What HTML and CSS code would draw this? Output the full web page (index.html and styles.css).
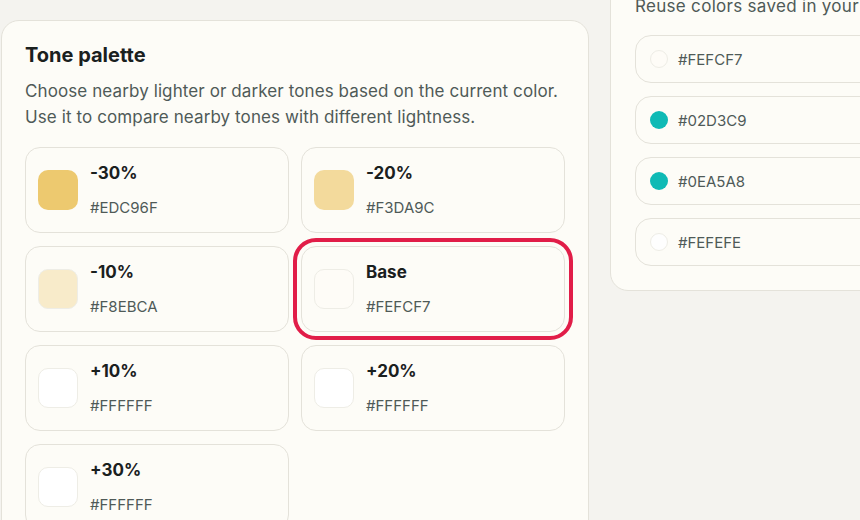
FILE: index.html
```html
<!DOCTYPE html>
<html lang="en">
<head>
<meta charset="utf-8">
<title>Tone palette</title>
<link rel="stylesheet" href="styles.css">
</head>
<body>
<div class="layout">
  <section class="panel tone-panel">
    <h2 class="panel-title">Tone palette</h2>
    <p class="panel-desc">Choose nearby lighter or darker tones based on the current color. Use it to compare nearby tones with different lightness.</p>
    <div class="tone-grid">
      <div class="tone-card">
        <span class="swatch" style="background:#EDC96F"></span>
        <div class="tone-text"><span class="tone-label">-30%</span><span class="tone-hex">#EDC96F</span></div>
      </div>
      <div class="tone-card">
        <span class="swatch" style="background:#F3DA9C"></span>
        <div class="tone-text"><span class="tone-label">-20%</span><span class="tone-hex">#F3DA9C</span></div>
      </div>
      <div class="tone-card">
        <span class="swatch swatch-light" style="background:#F8EBCA"></span>
        <div class="tone-text"><span class="tone-label">-10%</span><span class="tone-hex">#F8EBCA</span></div>
      </div>
      <div class="tone-card tone-card-active">
        <span class="swatch swatch-light" style="background:#FEFCF7"></span>
        <div class="tone-text"><span class="tone-label">Base</span><span class="tone-hex">#FEFCF7</span></div>
      </div>
      <div class="tone-card">
        <span class="swatch swatch-light" style="background:#FFFFFF"></span>
        <div class="tone-text"><span class="tone-label">+10%</span><span class="tone-hex">#FFFFFF</span></div>
      </div>
      <div class="tone-card">
        <span class="swatch swatch-light" style="background:#FFFFFF"></span>
        <div class="tone-text"><span class="tone-label">+20%</span><span class="tone-hex">#FFFFFF</span></div>
      </div>
      <div class="tone-card">
        <span class="swatch swatch-light" style="background:#FFFFFF"></span>
        <div class="tone-text"><span class="tone-label">+30%</span><span class="tone-hex">#FFFFFF</span></div>
      </div>
    </div>
  </section>
  <section class="panel saved-panel">
    <p class="panel-desc">Reuse colors saved in your history.</p>
    <ul class="saved-list">
      <li class="saved-item"><span class="dot dot-light" style="background:#FEFCF7"></span><span class="saved-hex">#FEFCF7</span></li>
      <li class="saved-item"><span class="dot" style="background:#0FBAB5"></span><span class="saved-hex">#02D3C9</span></li>
      <li class="saved-item"><span class="dot" style="background:#0FBAB5"></span><span class="saved-hex">#0EA5A8</span></li>
      <li class="saved-item"><span class="dot dot-light" style="background:#FEFEFE"></span><span class="saved-hex">#FEFEFE</span></li>
    </ul>
  </section>
</div>
</body>
</html>
```
FILE: styles.css
```css
* { box-sizing: border-box; }
html, body { margin: 0; padding: 0; }
body {
  background: #f4f3ef;
  font-family: Inter, "Noto Sans", "Liberation Sans", sans-serif;
  color: #1d2421;
  overflow: hidden;
  width: 860px;
  height: 520px;
}
.layout {
  display: flex;
  align-items: flex-start;
  gap: 21px;
  padding: 20px 0 0 1px;
}
.panel {
  background: #fdfcf7;
  border: 1px solid #e4e2da;
  border-radius: 18px;
  padding: 22px 23px 24px 23px;
  flex: none;
}
.tone-panel { width: 588px; height: 560px; }
.saved-panel { width: 420px; margin-top: -52px; padding-left: 24px; padding-top: 24px; }
.panel-title {
  margin: 0;
  font-size: 20px;
  line-height: 24px;
  font-weight: 700;
  color: #1a201e;
}
.panel-desc {
  margin: 11px 0 17px;
  font-size: 17px;
  line-height: 26px;
  letter-spacing: 0.1px;
  color: #4f5a57;
}
.saved-panel .panel-desc {
  margin-top: 0;
  margin-bottom: 16px;
  white-space: nowrap;
  letter-spacing: 0.3px;
}
.tone-grid {
  display: grid;
  grid-template-columns: 264px 264px;
  column-gap: 12px;
  row-gap: 13px;
}
.tone-card {
  height: 86px;
  border: 1px solid #e4e2da;
  border-radius: 15px;
  padding: 0 12px;
  display: flex;
  align-items: center;
  gap: 12px;
  background: #fdfcf7;
}
.tone-card-active {
  outline: 4px solid #e11d48;
  outline-offset: 4px;
}
.swatch {
  width: 40px;
  height: 40px;
  border-radius: 10px;
  flex: none;
}
.swatch-light { border: 1px solid #eeede6; }
.tone-text {
  display: flex;
  flex-direction: column;
  gap: 14px;
}
.tone-label {
  font-size: 17px;
  line-height: 22px;
  font-weight: 700;
  color: #1a201e;
}
.tone-hex {
  font-size: 15px;
  line-height: 20px;
  color: #4f5a57;
}
.saved-list {
  list-style: none;
  margin: 0;
  padding: 0;
  display: flex;
  flex-direction: column;
  gap: 13px;
}
.saved-item {
  height: 48px;
  border: 1px solid #e4e2da;
  border-radius: 16px;
  display: flex;
  align-items: center;
  gap: 10px;
  padding-left: 14px;
}
.dot {
  width: 18px;
  height: 18px;
  border-radius: 50%;
  flex: none;
}
.dot-light { border: 1px solid #eeede6; }
.saved-hex {
  font-size: 15px;
  color: #4f5a57;
}
```
